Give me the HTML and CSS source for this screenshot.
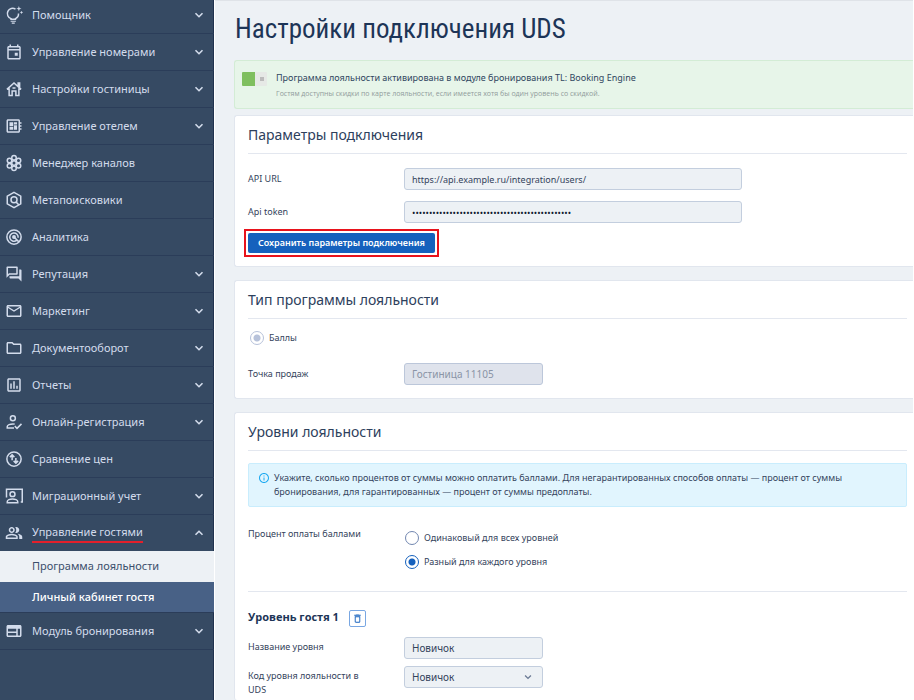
FILE: index.html
```html
<!DOCTYPE html>
<html lang="ru">
<head>
  <meta charset="UTF-8">
  <title>Настройки подключения UDS</title>
  <link rel="stylesheet" href="styles.css">
</head>
<body>
<svg class="sprite" aria-hidden="true">
  <symbol id="chevron" viewBox="0 0 12 12"><path class="line" d="M2.500 4.200L6 7.700l3.500-3.500"/></symbol>
</svg>
<div class="page">
  <!-- меню -->
  <nav class="sidebar">
    <a class="item first" href="#">
      <svg class="icon" viewBox="0 0 24 24"><path class="line" d="M14 4.300A7 7 0 1 0 8 16.800V17.500h6v-.7c2.600-1.200 4.200-3.600 4-6.800"/><path d="M7.500 19.500h7v1.500h-7zM9 22h4v1.500H9zM18.500 0l.9 2.600 2.600.9-2.600.9-.9 2.600-.9-2.600-2.600-.9 2.600-.9zM22 6.500l.7 1.300 1.300.7-1.300.7-.7 1.300-.7-1.300-1.300-.7 1.300-.7z"/></svg>
      <span>Помощник</span><svg class="arrow"><use href="#chevron"/></svg>
    </a>
    <a class="item" href="#">
      <svg class="icon" viewBox="0 0 24 24"><path d="M19 4h-1V2h-2v2H8V2H6v2H5c-1.110 0-1.990.9-1.990 2L3 20c0 1.100.890 2 2 2h14c1.100 0 2-.9 2-2V6c0-1.100-.9-2-2-2zm0 16H5V10h14v10zm0-12H5V6h14v2zm-6 5h4v4h-4z"/></svg>
      <span>Управление номерами</span><svg class="arrow"><use href="#chevron"/></svg>
    </a>
    <a class="item" href="#">
      <svg class="icon" viewBox="0 0 24 24"><path class="line" d="M2.500 12.500L12 4l9.500 8.500M17.500 8V4h2v6M5.500 11v9.500h4V14.500h5v6h4V11M10 10.500h4"/></svg>
      <span>Настройки гостиницы</span><svg class="arrow"><use href="#chevron"/></svg>
    </a>
    <a class="item" href="#">
      <svg class="icon" viewBox="0 0 24 24"><path d="M22 9V7h-2V5c0-1.100-.9-2-2-2H4c-1.100 0-2 .9-2 2v14c0 1.100.9 2 2 2h14c1.100 0 2-.9 2-2v-2h2v-2h-2v-2h2v-2h-2V9h2zm-4 10H4V5h14v14zM6 13h5v4H6zm6-6h4v3h-4zM6 7h5v5H6zm6 4h4v6h-4z"/></svg>
      <span>Управление отелем</span><svg class="arrow"><use href="#chevron"/></svg>
    </a>
    <a class="item" href="#">
      <svg class="icon" viewBox="0 0 24 24"><g class="line"><circle cx="12" cy="12" r="3"/><circle cx="12" cy="5" r="3"/><circle cx="12" cy="19" r="3"/><circle cx="6" cy="8.500" r="3"/><circle cx="18" cy="8.500" r="3"/><circle cx="6" cy="15.500" r="3"/><circle cx="18" cy="15.500" r="3"/></g></svg>
      <span>Менеджер каналов</span>
    </a>
    <a class="item" href="#">
      <svg class="icon" viewBox="0 0 24 24"><path class="line" d="M12 1.800l9 5v10.400l-9 5-9-5V6.800zM14.500 14.500l3.500 3.500"/><circle class="line" cx="12" cy="11.500" r="4"/></svg>
      <span>Метапоисковики</span>
    </a>
    <a class="item" href="#">
      <svg class="icon" viewBox="0 0 24 24"><g class="line"><circle cx="12" cy="12" r="9.500"/><path d="M15.500 16.500A5.600 5.600 0 1 1 17.500 13M12 12l6.500 6.500"/></g><circle cx="12" cy="12" r="2.600"/></svg>
      <span>Аналитика</span>
    </a>
    <a class="item" href="#">
      <svg class="icon" viewBox="0 0 24 24"><path d="M15 4v7H5.170L4 12.170V4h11m1-2H3c-.550 0-1 .450-1 1v14l4-4h10c.550 0 1-.450 1-1V3c0-.550-.450-1-1-1zm5 4h-2v9H6v2c0 .550.450 1 1 1h11l4 4V7c0-.550-.450-1-1-1z"/></svg>
      <span>Репутация</span><svg class="arrow"><use href="#chevron"/></svg>
    </a>
    <a class="item" href="#">
      <svg class="icon" viewBox="0 0 24 24"><path d="M22 6c0-1.100-.9-2-2-2H4c-1.100 0-2 .9-2 2v12c0 1.100.9 2 2 2h16c1.100 0 2-.9 2-2V6zm-2 0l-8 5-8-5h16zm0 12H4V8l8 5 8-5v10z"/></svg>
      <span>Маркетинг</span><svg class="arrow"><use href="#chevron"/></svg>
    </a>
    <a class="item" href="#">
      <svg class="icon" viewBox="0 0 24 24"><path d="M9.170 6l2 2H20v10H4V6h5.170M10 4H4c-1.100 0-1.990.9-1.990 2L2 18c0 1.100.9 2 2 2h16c1.100 0 2-.9 2-2V8c0-1.100-.9-2-2-2h-8l-2-2z"/></svg>
      <span>Документооборот</span><svg class="arrow"><use href="#chevron"/></svg>
    </a>
    <a class="item" href="#">
      <svg class="icon" viewBox="0 0 24 24"><path d="M19 3H5c-1.100 0-2 .9-2 2v14c0 1.100.9 2 2 2h14c1.100 0 2-.9 2-2V5c0-1.100-.9-2-2-2zm0 16H5V5h14v14zM7 10h2v7H7zm4-3h2v10h-2zm4 6h2v4h-2z"/></svg>
      <span>Отчеты</span><svg class="arrow"><use href="#chevron"/></svg>
    </a>
    <a class="item" href="#">
      <svg class="icon" viewBox="0 0 24 24"><g class="line"><circle cx="10.500" cy="7" r="3.300"/><path d="M12 20H3v-2c0-2 4-3.500 7.500-3.500.9 0 1.800.1 2.500.3M13 17.500l3 3 6-6"/></g></svg>
      <span>Онлайн-регистрация</span><svg class="arrow"><use href="#chevron"/></svg>
    </a>
    <a class="item" href="#">
      <svg class="icon" viewBox="0 0 24 24"><g class="line"><circle cx="12" cy="12" r="9.500"/><path d="M9.500 13.500V7M6.500 9.500l3-3 3 3M14.500 10.500V17M11.500 14.500l3 3 3-3"/></g></svg>
      <span>Сравнение цен</span>
    </a>
    <a class="item" href="#">
      <svg class="icon" viewBox="0 0 24 24"><g class="line"><path d="M2 14V3h21v17h-2M3 21v-1.500C3 17.500 6.500 16 10 16s7 1.500 7 3.500V21z"/><circle cx="10" cy="9.500" r="3.300"/></g></svg>
      <span>Миграционный учет</span><svg class="arrow"><use href="#chevron"/></svg>
    </a>
    <a class="item open" href="#">
      <svg class="icon" viewBox="0 0 24 24"><path d="M16.670 13.130C18.040 14.060 19 15.320 19 17v3h4v-3c0-2.180-3.570-3.470-6.330-3.870zM15 12c2.210 0 4-1.790 4-4s-1.790-4-4-4c-.470 0-.910.1-1.330.240C14.500 5.270 15 6.580 15 8s-.5 2.730-1.330 3.760c.420.140.860.240 1.330.240zM9 12c2.210 0 4-1.790 4-4s-1.790-4-4-4-4 1.790-4 4 1.790 4 4 4zm0-6c1.100 0 2 .9 2 2s-.9 2-2 2-2-.9-2-2 .9-2 2-2zm0 7c-2.670 0-8 1.340-8 4v3h16v-3c0-2.660-5.330-4-8-4zm6 5H3v-.990C3.200 16.290 6.300 15 9 15s5.800 1.290 6 2v1z"/></svg>
      <span>Управление гостями</span><svg class="arrow"><use href="#chevron"/></svg>
    </a>
    <a class="sub" href="#">Программа лояльности</a>
    <a class="sub active" href="#">Личный кабинет гостя</a>
    <a class="item" href="#">
      <svg class="icon" viewBox="0 0 24 24"><path d="M20 4H4c-1.100 0-1.990.9-1.990 2L2 18c0 1.100.9 2 2 2h16c1.100 0 2-.9 2-2V6c0-1.100-.9-2-2-2zm-5 14H4v-3.500h11V18zm0-5.500H4V9h11v3.500zm5 5.500h-3V9h3v9z"/></svg>
      <span>Модуль бронирования</span><svg class="arrow"><use href="#chevron"/></svg>
    </a>
  </nav>

  <main class="content">
    <h1>Настройки подключения UDS</h1>

    <div class="status">
      <input type="checkbox" class="switch" id="loyalty" checked>
      <div>
        <label for="loyalty">Программа лояльности активирована в модуле бронирования TL: Booking Engine</label>
        <p>Гостям доступны скидки по карте лояльности, если имеется хотя бы один уровень со скидкой.</p>
      </div>
    </div>

    <!-- параметры подключения -->
    <form class="card" action="#" method="post">
      <h2>Параметры подключения</h2>
      <div class="row">
        <label for="url">API URL</label>
        <input type="text" class="field wide" id="url" value="https://api.example.ru/integration/users/">
      </div>
      <div class="row">
        <label for="token">Api token</label>
        <input type="password" class="field wide" id="token" value="00000000000000000000000000000000000000000000000">
      </div>
      <div class="mark">
        <button type="submit" class="save">Сохранить параметры подключения</button>
      </div>
    </form>

    <!-- тип программы -->
    <section class="card type">
      <h2>Тип программы лояльности</h2>
      <label class="radio"><input type="radio" name="type" checked disabled>Баллы</label>
      <div class="row">
        <label for="point">Точка продаж</label>
        <input type="text" class="field" id="point" value="Гостиница 11105" disabled>
      </div>
    </section>

    <!-- уровни -->
    <section class="card levels">
      <h2>Уровни лояльности</h2>
      <div class="info">
        <svg viewBox="0 0 24 24"><path d="M11 7h2v2h-2zm0 4h2v6h-2zm1-9C6.480 2 2 6.480 2 12s4.480 10 10 10 10-4.480 10-10S17.520 2 12 2zm0 18c-4.410 0-8-3.590-8-8s3.590-8 8-8 8 3.590 8 8-3.590 8-8 8z"/></svg>
        <p>Укажите, сколько процентов от суммы можно оплатить баллами. Для негарантированных способов оплаты — процент от суммы бронирования, для гарантированных — процент от суммы предоплаты.</p>
      </div>
      <div class="row percent" role="radiogroup" aria-labelledby="percent">
        <span id="percent">Процент оплаты баллами</span>
        <div class="radios">
          <label class="radio"><input type="radio" name="percent">Одинаковый для всех уровней</label>
          <label class="radio"><input type="radio" name="percent" checked>Разный для каждого уровня</label>
        </div>
      </div>
      <div class="level">
        <h3>Уровень гостя 1
          <button type="button" class="delete" aria-label="Удалить">
            <svg viewBox="0 0 24 24"><path d="M6 19c0 1.100.9 2 2 2h8c1.100 0 2-.9 2-2V7H6v12zM8 9h8v10H8V9zm7.500-5l-1-1h-5l-1 1H5v2h14V4h-3.500z"/></svg>
          </button>
        </h3>
        <div class="row">
          <label for="name">Название уровня</label>
          <input type="text" class="field" id="name" value="Новичок">
        </div>
        <div class="row">
          <label for="code">Код уровня лояльности в UDS</label>
          <div class="select">
            <select class="field" id="code"><option>Новичок</option></select>
            <svg class="arrow"><use href="#chevron"/></svg>
          </div>
        </div>
      </div>
    </section>
  </main>
</div>
</body>
</html>
```
FILE: styles.css
```css
*{
  margin: 0;
  padding: 0;
  box-sizing: border-box;
}
body{
  background: #fff;
  color: #34435c;
  font: 9px/14px "Noto Sans", sans-serif;
}
input,select,button{
  font: inherit;
  color: inherit;
}
.sprite{
  display: none;
}
.line{
  fill: none;
  stroke: currentColor;
  stroke-width: 2;
}
#chevron .line{
  stroke-width: 1.6;
}
.page{
  display: flex;
  min-height: 100vh;
  padding-right: 1px;
}

/* меню */
.sidebar{
  flex: 0 0 215px;
  background: #364a63;
  border-right: 1px solid #fff;
  box-shadow: inset -1px 0 #20324e;
}
.item{
  display: flex;
  align-items: center;
  height: 37px;
  padding: 0 9px 0 5px;
  border-bottom: 1px solid #2b3d59;
  color: #d3dcec;
  font-size: 11px;
  line-height: 18px;
  text-decoration: none;
}
.item.first{
  height: 34px;
  padding-bottom: 3px;
}
.item.open{
  height: 36px;
  border-bottom: 0;
}
.item.open span{
  border-bottom: 2px solid #e3202b;
}
.item.open .arrow{
  transform: rotate(180deg);
}
.icon{
  width: 18px;
  height: 18px;
  margin-right: 9px;
  fill: currentColor;
}
.arrow{
  width: 12px;
  height: 12px;
  margin-left: auto;
}
.sub{
  display: block;
  height: 31px;
  padding-left: 32px;
  background: #edf1f5;
  color: #3c4f6c;
  font-size: 11px;
  line-height: 30px;
  text-decoration: none;
}
.sub.active{
  background: #486186;
  border-bottom: 1px solid #2b3d59;
  color: #fff;
  font-weight: 500;
}

/* содержимое */
.content{
  display: flex;
  flex: 1;
  flex-direction: column;
  min-width: 0;
  padding-left: 19px;
  background: #edf1f5;
  border-top: 1px solid #dfe3e8;
}
h1{
  padding: 10px 0 13px 1px;
  color: #1d3557;
  font: 400 27px/36px "Roboto Condensed", "Liberation Sans Narrow", Roboto, sans-serif;
}
.status{
  display: flex;
  gap: 9px;
  height: 49px;
  margin-bottom: 6px;
  padding: 10px 7px;
  background: #e7f5e9;
  border: 1px solid #d3ecd5;
  border-right: 0;
  border-radius: 3px 0 0 3px;
}
.status label{
  color: #2f4560;
}
.status p{
  margin-top: 2px;
  color: #909b9b;
  font-family: "Open Sans", sans-serif;
  font-size: 7px;
}
.switch{
  appearance: none;
  width: 25px;
  height: 14px;
  margin-top: 1px;
  border-radius: 1px;
  background: linear-gradient(#bbb, #bbb) 18px 5px / 4px 4px no-repeat,
    linear-gradient(90deg, #7fbf5f 13px, #e6e9e6 13px);
}
.card{
  margin-bottom: 13px;
  padding: 0 6px 9px 13px;
  background: #fff;
  border: 1px solid #e1e6ee;
  border-right: 0;
  border-radius: 3px 0 0 3px;
}
h2{
  height: 38px;
  margin-bottom: 14px;
  border-bottom: 1px solid #e3e7ef;
  color: #2d405c;
  font-size: 14px;
  font-weight: 400;
  line-height: 37px;
}
.row{
  display: grid;
  grid-template-columns: 156px 1fr;
  align-items: center;
  margin-bottom: 11px;
}
.field{
  width: 139px;
  height: 22px;
  padding: 0 7px;
  background: #edf1f5;
  border: 1px solid #c3cede;
  border-radius: 3px;
  font-size: 10px;
}
.field.wide{
  width: 338px;
  font-size: 9px;
}
#token{
  color: #111c30;
}
.field:disabled{
  background: #dfe3ec;
  border-color: #bcc7da;
  color: #8a94a6;
}
.mark{
  width: 195px;
  margin: -5px 0 0 -4px;
  padding: 2px;
  border: 2px solid #e8131c;
}
.save{
  display: block;
  width: 100%;
  height: 20px;
  background: #1561bd;
  border: 0;
  border-radius: 2px;
  color: #fff;
  font-weight: 600;
}
.radio{
  display: flex;
  align-items: center;
  gap: 5px;
}
.radio input{
  appearance: none;
  width: 14px;
  height: 14px;
  border: 1px solid #7287b0;
  border-radius: 50%;
}
.radio input:checked{
  border-color: #1561bd;
  background: radial-gradient(#1561bd 3px, transparent 4px);
}
.radio input:disabled{
  border-color: #b7c2da;
  background: radial-gradient(#b7c2da 3px, transparent 4px);
}
.type h2,.levels h2{
  margin-bottom: 12px;
}
.type .radio{
  padding-left: 2px;
  margin-bottom: 18px;
}
.type .row{
  margin-bottom: 4px;
}
.levels{
  flex: 1;
  margin-bottom: 0;
  padding-bottom: 0;
  border-bottom: 0;
}
.info{
  display: flex;
  gap: 4px;
  margin-bottom: 20px;
  padding: 7px 9px;
  background: #e1f5fe;
  border: 1px solid #c9edfd;
  border-radius: 2px;
}
.info svg{
  flex: 0 0 12px;
  height: 12px;
  margin-top: 1px;
  fill: #1eaaf1;
}
.percent{
  align-items: start;
  margin-bottom: 22px;
}
.radios{
  display: grid;
  gap: 10px;
  padding: 4px 0 0 1px;
}
.level{
  padding-top: 16px;
  border-top: 1px solid #e3e7ef;
}
h3{
  display: flex;
  gap: 10px;
  margin-bottom: 10px;
  color: #1d3557;
  font-family: "Open Sans", sans-serif;
  font-size: 11px;
  line-height: 18px;
}
.delete{
  width: 17px;
  height: 17px;
  margin-top: 2px;
  background: #fff;
  border: 1px solid #79a7e2;
  border-radius: 2px;
}
.delete svg{
  display: block;
  width: 11px;
  height: 11px;
  margin: auto;
  fill: #1561bd;
}
.level .row{
  align-items: start;
  margin-bottom: 7px;
}
.level .row:last-child{
  margin-bottom: 0;
}
.level label{
  max-width: 124px;
  padding-top: 3px;
}
.select{
  display: grid;
  width: 139px;
}
.select > *{
  grid-area: 1 / 1;
}
.select .field{
  appearance: none;
}
.select .arrow{
  width: 10px;
  height: 10px;
  margin: 6px 10px 0 auto;
  color: #6b7a95;
  pointer-events: none;
}
```
